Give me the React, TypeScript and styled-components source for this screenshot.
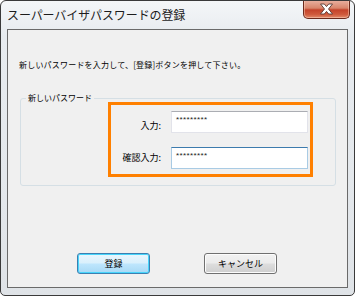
import React from 'react';
import styled, { createGlobalStyle } from 'styled-components';

const GlobalStyle = createGlobalStyle`
  html, body {
    margin: 0;
    padding: 0;
    background: #ffffff;
  }
  * {
    box-sizing: border-box;
  }
`;

const jp = `"Noto Sans CJK JP", "Noto Sans", sans-serif`;

const Window = styled.div`
  width: 355px;
  height: 296px;
  border: 1px solid #3a3a3a;
  border-radius: 6px 6px 5px 5px;
  background: linear-gradient(180deg, #f4f6f8 0%, #e7ebef 12%, #e4e8ec 60%, #dfe3e7 100%);
  display: flex;
  flex-direction: column;
  overflow: hidden;
  font-family: ${jp};
`;

const TitleBar = styled.div`
  height: 28px;
  display: flex;
  justify-content: space-between;
  align-items: flex-start;
  padding-left: 6px;
  padding-right: 4px;
`;

const Title = styled.div`
  font-size: 12px;
  line-height: 14px;
  margin-top: 7px;
  color: #1c1c1c;
  letter-spacing: -0.1px;
`;

const CloseButton = styled.div`
  width: 47px;
  height: 19px;
  margin-top: -1px;
  border: 1px solid #6b2a1c;
  border-top: none;
  border-radius: 0 0 5px 5px;
  background: linear-gradient(180deg, #eab3a3 0%, #d8866c 45%, #c4432a 55%, #cf5a3c 80%, #e28a6a 100%);
  box-shadow: inset 0 0 0 1px rgba(255, 220, 200, 0.45);
  display: flex;
  align-items: center;
  justify-content: center;
`;

const Client = styled.div`
  margin: 0 6px;
  height: 259px;
  border: 1px solid #6a6a6a;
  background: #f0f0f0;
  display: flex;
  flex-direction: column;
  padding: 29px 11px 13px 11px;
`;

const Instruction = styled.div`
  font-size: 8px;
  line-height: 12px;
  color: #000;
  letter-spacing: 0.2px;
`;

const GroupBox = styled.div`
  position: relative;
  margin: 27px 0 0 1px;
  height: 88px;
  border: 1px solid #d5dfe5;
  border-radius: 3px;
  padding: 3px 22px 0 87px;
`;

const Legend = styled.div`
  position: absolute;
  left: 5px;
  top: -7px;
  padding: 0 2px;
  background: #f0f0f0;
  font-size: 8px;
  line-height: 12px;
  color: #000;
`;

const Highlight = styled.div`
  height: 75px;
  border: 3px solid #ff8000;
  display: grid;
  grid-template-columns: 1fr 137px;
  row-gap: 14px;
  padding: 6px 2px 0 5px;
  align-content: start;
`;

const FieldLabel = styled.label<{ $shift?: number }>`
  justify-self: end;
  align-self: center;
  padding-right: 10px;
  font-size: 9px;
  line-height: 12px;
  color: #000;
  transform: translateY(${(p) => p.$shift ?? 0}px);
`;

const PasswordBox = styled.div<{ $focused?: boolean }>`
  height: 22px;
  background: #fff;
  border: 1px solid ${(p) => (p.$focused ? '#a9cbe4' : '#e2e3ea')};
  border-top-color: ${(p) => (p.$focused ? '#3d7bad' : '#abadb3')};
  padding: 3px 0 0 4px;
  font-family: "Liberation Sans", Arial, sans-serif;
  font-size: 8px;
  line-height: 10px;
  letter-spacing: 0.4px;
  color: #222;
`;

const ButtonRow = styled.div`
  margin-top: auto;
  display: flex;
  justify-content: center;
  gap: 54px;
  padding-right: 1px;
`;

const Button = styled.button<{ $primary?: boolean }>`
  width: 73px;
  height: 21px;
  padding: 0;
  border: 1px solid ${(p) => (p.$primary ? '#3c7fb1' : '#707070')};
  border-radius: 3px;
  background: ${(p) =>
    p.$primary
      ? 'linear-gradient(180deg, #eaf6fd 0%, #d9f0fc 48%, #bee6fd 52%, #a7d9f5 100%)'
      : 'linear-gradient(180deg, #f2f2f2 0%, #ebebeb 48%, #dddddd 52%, #cfcfcf 100%)'};
  box-shadow: inset 0 0 0 1px ${(p) => (p.$primary ? '#48d5fb' : '#fcfcfc')};
  font-family: ${jp};
  font-size: 9px;
  color: #000;
`;

const CloseIcon = () => (
  <svg width="15" height="12" viewBox="0 0 15 12">
    <path
      d="M1.5 1 H5.3 L7.5 3.6 L9.7 1 H13.5 L9.5 6 L13.5 11 H9.7 L7.5 8.4 L5.3 11 H1.5 L5.5 6 Z"
      fill="#ffffff"
      stroke="#5a3a34"
      strokeWidth="0.9"
      strokeLinejoin="round"
    />
  </svg>
);

export default function App() {
  return (
    <>
      <GlobalStyle />
      <Window>
        <TitleBar>
          <Title>スーパーバイザパスワードの登録</Title>
          <CloseButton>
            <CloseIcon />
          </CloseButton>
        </TitleBar>
        <Client>
          <Instruction>新しいパスワードを入力して、[登録]ボタンを押して下さい。</Instruction>
          <GroupBox>
            <Legend>新しいパスワード</Legend>
            <Highlight>
              <FieldLabel $shift={4}>入力:</FieldLabel>
              <PasswordBox>*********</PasswordBox>
              <FieldLabel>確認入力:</FieldLabel>
              <PasswordBox $focused>*********</PasswordBox>
            </Highlight>
          </GroupBox>
          <ButtonRow>
            <Button $primary>登録</Button>
            <Button>キャンセル</Button>
          </ButtonRow>
        </Client>
      </Window>
    </>
  );
}
